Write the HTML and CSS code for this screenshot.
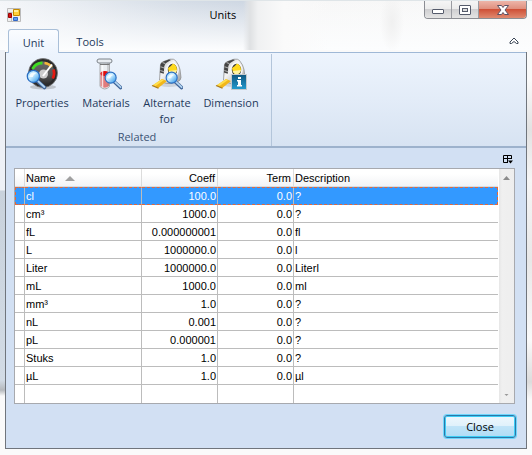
FILE: index.html
```html
<!DOCTYPE html>
<html lang="en">
<head>
<meta charset="utf-8">
<title>Units</title>
<link rel="stylesheet" href="styles.css">
</head>
<body>
<svg class="defs" aria-hidden="true">
  <defs>
    <linearGradient id="lens" x1="0" y1="0" x2="1" y2="1"><stop offset="0" stop-color="#9fd8fa"/><stop offset=".45" stop-color="#c8ecff"/><stop offset="1" stop-color="#1b8be6"/></linearGradient>
    <linearGradient id="dial" x1="0" y1="0" x2="0" y2="1"><stop offset="0" stop-color="#6a6a6a"/><stop offset=".6" stop-color="#555"/><stop offset="1" stop-color="#2b2b2b"/></linearGradient>
    <linearGradient id="steel" x1="0" y1="0" x2="1" y2="1"><stop offset="0" stop-color="#bbb"/><stop offset=".4" stop-color="#f4f4f4"/><stop offset="1" stop-color="#9a9a9a"/></linearGradient>
    <linearGradient id="info" x1="0" y1="0" x2="0" y2="1"><stop offset="0" stop-color="#0f5680"/><stop offset="1" stop-color="#239bd0"/></linearGradient>
    <symbol id="magnifier" viewBox="0 0 20 20">
      <path d="M11 11.500l6.500 6" stroke="#41669a" stroke-width="3.600" stroke-linecap="round"/>
      <path d="M11.500 11.500l6 5.600" stroke="#b4d6f2" stroke-width="1.800" stroke-linecap="round"/>
      <circle cx="7" cy="7" r="5.800" fill="url(#lens)" stroke="#2a6fc4" stroke-width="1.200"/>
      <path d="M3 7.500c.5-3.800 4-5 6.500-3.300-1.400.6-2.500 1.600-3 3.300z" fill="#fff" opacity=".8"/>
    </symbol>
    <symbol id="tape" viewBox="0 0 32 32">
      <ellipse cx="18" cy="26" rx="12" ry="3" fill="#777" opacity=".22"/>
      <path d="M9.500 6.500q.5-2 3-3L19 1.200q4-.6 5.500 1.300 3.500 4 4.500 9l1 8q0 3-4 4.500l-6 1.500q-5 .5-7.500-1L8.500 22z" fill="url(#steel)" stroke="#888" stroke-width=".7"/>
      <path d="M9.500 6.500q.5-2 3-3L18 1.500l2 .6-4.500 2.600q-2 1.500-2.300 4l-.4 7-3.900-1.200z" fill="#444"/>
      <path d="M9.500 8.700l3.800 1.300M9.300 12.500l3.800 1.300M11.500 4.500l3 1.300" stroke="#aaa" stroke-width="1.200"/>
      <ellipse cx="21.500" cy="12" rx="5.500" ry="7" fill="#3a3a3a" stroke="#f8f8f8" stroke-width="1.600"/>
      <path d="M17 10Q20 8.500 22 5.500q4 1.500 4 6.500-1 4-5 4.500-3.500-1-4-6.500z" fill="#ffd91c"/>
      <path d="M17.500 13l8.500-1q-1 4-5 4.500-2.500-.8-3.500-3.500z" fill="#fff2a0"/>
      <path d="M1.500 27.500L11 21l5 2-9 7.300z" fill="#f2b71a"/>
      <path d="M2 27L11 21.300l2 .7-8.500 6z" fill="#ffdf4d"/>
      <path d="M1 27.500l6.500 2.800" stroke="#a6791f" stroke-width="1.200"/>
    </symbol>
  </defs>
</svg>

<header class="titlebar">
  <svg class="app-icon" viewBox="0 0 14 14" aria-hidden="true">
    <path d="M.5.500h13v13H.5z" fill="#eee" stroke="#bbb"/>
    <path d="M.5 4.500h5M4.500 9v4.500M9.500 9v4.500" stroke="#bbb"/>
    <path d="M6.500 1.500h6v6h-6z" fill="#ffd13b" stroke="#c48a00"/><path d="M7 2h4v2H7z" fill="#ffed9a"/>
    <path d="M1.500 5.500h3v4h-3z" fill="#d21414" stroke="#9b0000"/>
    <path d="M6.500 9.500h4v3h-4z" fill="#5a9cf0" stroke="#3166c7"/>
  </svg>
  <h1 class="title">Units</h1>
  <div class="caption-buttons">
    <button class="caption" type="button" aria-label="Minimize"><svg viewBox="0 0 14 12"><rect x="1.500" y="5.500" width="11" height="4" rx=".5" fill="#fff" stroke="#555b6b"/></svg></button>
    <button class="caption" type="button" aria-label="Maximize"><svg viewBox="0 0 14 12"><rect x="1.500" y="1.500" width="11" height="9" rx=".5" fill="#fff" stroke="#555b6b"/><rect x="4.500" y="4.500" width="5" height="3" fill="#ddd" stroke="#555b6b"/></svg></button>
    <button class="caption caption-close" type="button" aria-label="Close window"><svg viewBox="0 0 14 12"><path d="M1.500 1.500h4L7 3.500l1.500-2h4L9 6l3.500 4.500h-4L7 8.500l-1.500 2h-4L5 6z" fill="#fff" stroke="#5b5163"/></svg></button>
  </div>
</header>

<nav class="tabs">
  <button class="tab tab-active" type="button">Unit</button>
  <button class="tab" type="button">Tools</button>
  <button class="collapse" type="button" aria-label="Collapse ribbon"><svg viewBox="0 0 10 8"><path d="M1 5l4-4 4 4v1.500H7.500L5 4.500 2.500 6.500H1z" fill="#fff" stroke="#3b4656"/></svg></button>
</nav>

<main class="client">
  <section class="ribbon">
    <div class="group">
      <div class="tools">
        <button class="tool tool-properties" type="button">
          <svg viewBox="0 0 32 32" aria-hidden="true">
            <ellipse cx="17" cy="29" rx="13" ry="2.500" fill="#777" opacity=".35"/>
            <circle cx="17" cy="15" r="14.500" fill="#2c2c2c" stroke="#777" stroke-width=".8"/>
            <circle cx="17" cy="15" r="11.500" fill="url(#dial)"/>
            <path d="M6.500 11A11 11 0 0 1 16.500 5" stroke="#3fdc22" stroke-width="2.800" fill="none"/>
            <path d="M18.500 5a11 11 0 0 1 7.300 4" stroke="#f5b53a" stroke-width="2.600" fill="none"/>
            <path d="M27.500 11.500a11 11 0 0 1-.7 9" stroke="#e51b12" stroke-width="2.600" fill="none"/>
            <circle cx="17.500" cy="16" r="4.500" fill="#ccc"/>
            <path d="M17 18L26 6.500" stroke="#fff" stroke-width="2"/>
            <use href="#magnifier" x="0" y="11" width="21" height="21"/>
          </svg>
          <span>Properties</span>
        </button>
        <button class="tool tool-materials" type="button">
          <svg viewBox="0 0 32 32" aria-hidden="true">
            <path d="M10 4h9.500v24.500q-4.700 5-9.500 0z" fill="#eceff2" stroke="#999" stroke-width=".8"/>
            <path d="M10.500 15H19v13q-4 3.500-8.500 0z" fill="#e27c7c"/>
            <ellipse cx="14.800" cy="15.500" rx="4.300" ry="2.500" fill="#e00d0d"/>
            <path d="M12.500 5v24" stroke="#fff" stroke-width="1.500" opacity=".75"/>
            <path d="M18 5v23" stroke="#888" opacity=".6"/>
            <rect x="7" y="1" width="15" height="4" rx="2" fill="#e9edf1" stroke="#7d838a"/>
            <path d="M10 6.500h9.500" stroke="#777"/>
            <use href="#magnifier" x="14" y="13" width="19" height="19"/>
          </svg>
          <span>Materials</span>
        </button>
        <button class="tool tool-alternate" type="button">
          <svg viewBox="0 0 32 32" aria-hidden="true"><use href="#tape" width="32" height="32"/><use href="#magnifier" x="14" y="13" width="19" height="19"/></svg>
          <span>Alternate for</span>
        </button>
        <button class="tool tool-dimension" type="button">
          <svg viewBox="0 0 32 32" aria-hidden="true"><use href="#tape" width="32" height="32"/>
            <rect x="16.500" y="16.500" width="15" height="15" fill="url(#info)" stroke="#c5c9cc"/>
            <path d="M23 19h3v2h-3zM22 22h4v5h1v1.500h-5V27h1v-3.500h-1z" fill="#fff"/>
          </svg>
          <span>Dimension</span>
        </button>
      </div>
      <div class="group-label">Related</div>
    </div>
  </section>

  <section class="content">
    <div class="grid-tools">
      <button class="chooser" type="button" aria-label="Choose columns"><svg viewBox="0 0 10 9"><path d="M5 7.500H.5v-7h8V4M.5 3.500h8M4.500 1v6" fill="none" stroke="#000"/><path d="M5 5.500h5L7.500 8.500z"/></svg></button>
    </div>
    <div class="grid">
      <table>
        <colgroup><col class="c-mark"><col class="c-name"><col class="c-num"><col class="c-num"><col></colgroup>
        <thead>
          <tr><th></th><th>Name<svg class="sort" viewBox="0 0 10 5" aria-hidden="true"><path d="M5 0l5 5H0z" fill="#a0a0a0"/></svg></th><th class="num">Coeff</th><th class="num">Term</th><th>Description</th></tr>
        </thead>
        <tbody>
          <tr class="selected"><td></td><td>cl</td><td class="num">100.0</td><td class="num">0.0</td><td>?</td></tr>
          <tr><td></td><td>cm³</td><td class="num">1000.0</td><td class="num">0.0</td><td>?</td></tr>
          <tr><td></td><td>fL</td><td class="num">0.000000001</td><td class="num">0.0</td><td>fl</td></tr>
          <tr><td></td><td>L</td><td class="num">1000000.0</td><td class="num">0.0</td><td>l</td></tr>
          <tr><td></td><td>Liter</td><td class="num">1000000.0</td><td class="num">0.0</td><td>Literl</td></tr>
          <tr><td></td><td>mL</td><td class="num">1000.0</td><td class="num">0.0</td><td>ml</td></tr>
          <tr><td></td><td>mm³</td><td class="num">1.0</td><td class="num">0.0</td><td>?</td></tr>
          <tr><td></td><td>nL</td><td class="num">0.001</td><td class="num">0.0</td><td>?</td></tr>
          <tr><td></td><td>pL</td><td class="num">0.000001</td><td class="num">0.0</td><td>?</td></tr>
          <tr><td></td><td>Stuks</td><td class="num">1.0</td><td class="num">0.0</td><td>?</td></tr>
          <tr><td></td><td>µL</td><td class="num">1.0</td><td class="num">0.0</td><td>µl</td></tr>
          <tr><td></td><td></td><td></td><td></td><td></td></tr>
        </tbody>
      </table>
      <div class="scrollbar">
        <button type="button" aria-label="Scroll up"><svg viewBox="0 0 7 4"><path d="M3.500 0L7 4H0z" fill="#8c8c8c"/></svg></button>
        <button type="button" aria-label="Scroll down"><svg viewBox="0 0 7 4"><path d="M1.500 1h4l-2 2z" fill="#999"/></svg></button>
      </div>
    </div>
    <footer class="actions"><button class="close" type="button">Close</button></footer>
  </section>
</main>
</body>
</html>
```
FILE: styles.css
```css
* { box-sizing: border-box; }

body {
  margin: 0;
  min-height: 100vh;
  padding: 0 5px 6px;
  display: flex;
  flex-direction: column;
  font: 11px/16px "Open Sans", "Noto Sans", sans-serif;
  color: #1e395b;
  border-top: 1px solid #dfe5e8;
  background:
    radial-gradient(ellipse 12px 30px at 392px 22px, #f0f0f0, transparent),
    linear-gradient(90deg, transparent 243px, #dfe1e3 250px, #f0f1f2 258px, #fafafa 284px, transparent 330px) 0 0 / 100% 50px no-repeat,
    linear-gradient(to bottom, transparent, #fcfdfe 50px) 0 0 / 100% 50px no-repeat,
    linear-gradient(90deg, #f4f6f9, #d4dce6 180px, #cdd6e2 244px, #f7f7f7 270px, #f8f8f8) 0 0 / 100% 50px no-repeat,
    linear-gradient(to bottom, #eef1f6 190px, #c9d2dc 191px, #d2dbe5 380px, #b5b8bc 390px, #fafafa 396px) 0 0 / 5px 100% no-repeat,
    linear-gradient(to bottom, #fafafa 80px, #e2e2e2 130px, #f6f6f6 180px, #e8e8e8 260px, #fafafa 340px, #dcdcdc 382px, #fafafa 400px) 100% 0 / 5px 100% no-repeat,
    #fafafa;
}

button {
  font: inherit;
  color: inherit;
  background: none;
  border: 0;
  padding: 0;
  margin: 0;
}

svg { display: block; }
.defs { position: absolute; width: 0; height: 0; }

.titlebar {
  display: grid;
  grid-template-columns: minmax(0, 204fr) auto minmax(0, 290fr);
  align-items: start;
  height: 28px;
}
.app-icon { width: 14px; height: 14px; margin: 7px 0 0 2px; }
.title {
  margin: 6px 0 0;
  font-size: 11px;
  font-weight: 400;
  line-height: 16px;
  color: #000;
}

.caption-buttons {
  justify-self: end;
  display: flex;
  height: 18px;
  border: 1px solid #8b8d93;
  border-top: 0;
  border-radius: 0 0 4px 4px;
  overflow: hidden;
}
.caption {
  width: 27px;
  display: flex;
  align-items: center;
  justify-content: center;
  border-right: 1px solid #9a9ca2;
  background: linear-gradient(#f5f5f5, #ececec 45%, #cfcfd1 50%, #e4e4e4);
}
.caption svg { width: 14px; height: 12px; }
.caption-close {
  width: 47px;
  border: 0;
  background: linear-gradient(#edb5a9, #e0907f 45%, #cf5138 50%, #e08a70);
}

.tabs {
  display: flex;
  height: 23px;
  padding-left: 3px;
}
.tab { width: 62px; padding-top: 2px; }
.tab-active {
  position: relative;
  width: 51px;
  height: 24px;
  background: linear-gradient(#fafcff, #edf4fd);
  border: 1px solid #a9bfd8;
  border-bottom: 0;
  border-radius: 3px 3px 0 0;
}
.collapse { margin: 8px 8px 0 auto; height: 8px; }
.collapse svg { width: 10px; height: 8px; }

.client {
  flex: 1;
  display: flex;
  flex-direction: column;
  border: 1px solid #70757c;
  border-top: 0;
  background: #d2e0f3;
}

.ribbon {
  display: flex;
  height: 96px;
  padding-top: 1px;
  border-top: 1px solid #9fb8d6;
  border-bottom: 2px solid #9db2cc;
  background: linear-gradient(#edf4fd, #e3ecf8 50%, #d7e3f2);
}
.group {
  display: flex;
  flex-direction: column;
  padding: 4px 8px 0 5px;
  border-right: 1px solid #b3c5da;
}
.tools { display: flex; gap: 4px; height: 71px; }
.tool {
  display: flex;
  flex-direction: column;
  align-items: center;
  gap: 5px;
}
.tool svg { width: 32px; height: 32px; }
.tool-properties { width: 62px; }
.tool-materials { width: 58px; }
.tool-alternate { width: 56px; }
.tool-dimension { width: 64px; }
.group-label { text-align: center; color: #3c5475; }

.content { padding: 0 11px 8px 8px; }
.grid-tools {
  display: flex;
  justify-content: flex-end;
  height: 20px;
  padding: 7px 2px 0 0;
}
.chooser { height: 9px; }
.chooser svg { width: 10px; height: 9px; }

.grid {
  display: flex;
  border: 1px solid #a7a9ae;
  background: #fff;
}
table {
  flex: 1;
  width: 100%;
  table-layout: fixed;
  border-collapse: separate;
  border-spacing: 0;
  font: 11px/16px "Liberation Sans", Arial, sans-serif;
  color: #000;
}
.c-mark { width: 10px; }
.c-name { width: 117px; }
.c-num { width: 76px; }
th, td {
  height: 18px;
  padding: 0 1px;
  border-right: 1px solid #bcbcbc;
  border-bottom: 1px solid #bcbcbc;
  font-weight: 400;
  text-align: left;
  white-space: nowrap;
}
th {
  border-color: #dcdcdc;
  background: linear-gradient(#fff 30%, #f2f3f5);
}
th:last-child, td:last-child { border-right: 0; }
.num { text-align: right; }
th.num { padding-right: 2px; }
.sort { display: inline-block; width: 10px; height: 5px; margin-left: 10px; vertical-align: 1px; }
.selected td {
  background: #3399ff;
  color: #fff;
  border-top: 1px dashed #e2683c;
  border-bottom: 1px dashed #e2683c;
  line-height: 15px;
}
.selected td:first-child { border-left: 1px dashed #e2683c; }
.selected td:last-child { border-right: 1px dashed #e2683c; }
tbody tr:last-child td { border-bottom: 0; }

.scrollbar {
  flex: 0 0 16px;
  display: flex;
  flex-direction: column;
  justify-content: space-between;
  border-left: 1px solid #fff;
  background: linear-gradient(90deg, #e6e6e6, #f0f0f0 3px, #eee);
}
.scrollbar button {
  display: flex;
  align-items: center;
  justify-content: center;
  height: 17px;
}
.scrollbar svg { width: 7px; height: 4px; }

.actions {
  display: flex;
  justify-content: flex-end;
  padding: 11px 0 1px;
}
.actions .close {
  width: 72px;
  height: 23px;
  margin-right: -1px;
  border: 1px solid #2c77a8;
  border-radius: 3px;
  box-shadow: 0 0 0 1px #6fd6fb, inset 0 0 0 1px #3ccdf5;
  background: linear-gradient(#eef7fd, #dff1fb 48%, #c0e4f8 50%, #b0dcf5);
  color: #000;
}
```
